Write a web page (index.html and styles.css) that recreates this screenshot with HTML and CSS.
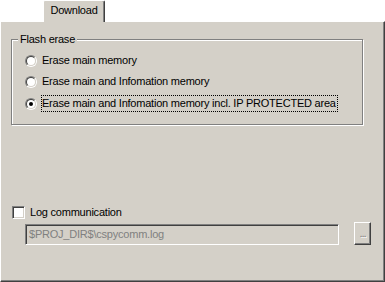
FILE: index.html
```html
<!DOCTYPE html>
<html>
<head>
<meta charset="utf-8">
<link rel="stylesheet" href="styles.css">
</head>
<body>
<div class="tabs">
  <div class="tab">Download</div>
</div>
<div class="panel">
  <div class="group">
    <span class="legend">Flash erase</span>
    <div class="row"><span class="radio"><span class="radio-in"></span></span><span class="label">Erase main memory</span></div>
    <div class="row"><span class="radio"><span class="radio-in"></span></span><span class="label">Erase main and Infomation memory</span></div>
    <div class="row"><span class="radio"><span class="radio-in"><span class="dot"></span></span></span><span class="label focus">Erase main and Infomation memory incl. IP PROTECTED area</span></div>
  </div>
  <div class="check-row"><span class="check"></span><span class="check-label">Log communication</span></div>
  <div class="path-row">
    <div class="field">$PROJ_DIR$\cspycomm.log</div>
    <div class="btn">...</div>
  </div>
</div>
</body>
</html>
```
FILE: styles.css
```css
html, body {
  margin: 0;
  padding: 0;
  background: #ffffff;
}
body {
  width: 385px;
  height: 282px;
  font-family: "Liberation Sans", Arial, sans-serif;
  font-size: 11px;
  letter-spacing: -0.22px;
  color: #000;
  overflow: hidden;
}
.tabs {
  height: 21px;
  display: flex;
  align-items: flex-end;
  padding-left: 43px;
}
.tab {
  position: relative;
  z-index: 1;
  box-sizing: border-box;
  width: 62px;
  height: 22px;
  margin-bottom: -1px;
  background: #d4d0c8;
  border-top: 1px solid #fff;
  border-left: 1px solid #fff;
  border-right: 1px solid #404040;
  box-shadow: inset -1px 0 0 #808080;
  border-top-left-radius: 2px;
  border-top-right-radius: 2px;
  display: flex;
  justify-content: center;
  padding-top: 3px;
  line-height: 13px;
}
.panel {
  box-sizing: border-box;
  height: 261px;
  background: #d4d0c8;
  border-top: 1px solid #fff;
  border-left: 1px solid #fff;
  border-right: 1px solid #404040;
  border-bottom: 1px solid #404040;
  box-shadow: inset -1px -1px 0 #808080;
  padding-top: 17px;
  padding-left: 10px;
}
.group {
  box-sizing: border-box;
  width: 352px;
  height: 86px;
  border: 1px solid #808080;
  box-shadow: inset 1px 1px 0 #fff, 1px 1px 0 #fff;
  padding: 9px 0 0 13px;
  display: flex;
  flex-direction: column;
}
.legend {
  align-self: flex-start;
  margin: -16px 0 4px -7px;
  padding: 0 2px;
  background: #d4d0c8;
  line-height: 13px;
  height: 13px;
}
.row {
  height: 21px;
  display: flex;
  align-items: center;
  gap: 5px;
}
.row:last-child {
  height: 22px;
  padding-top: 1px;
  box-sizing: border-box;
}
.radio {
  box-sizing: border-box;
  width: 12px;
  height: 12px;
  border-radius: 50%;
  border: 1px solid;
  border-color: #808080 #fff #fff #808080;
  flex: none;
}
.radio-in {
  box-sizing: border-box;
  display: flex;
  align-items: center;
  justify-content: center;
  width: 10px;
  height: 10px;
  border-radius: 50%;
  border: 1px solid;
  border-color: #404040 #d4d0c8 #d4d0c8 #404040;
  background: #fff;
}
.dot {
  width: 4px;
  height: 4px;
  border-radius: 50%;
  background: #000;
}
.label {
  line-height: 15px;
  border: 1px solid transparent;
  padding: 0 1px 0 0;
  margin-left: -1px;
}
.label.focus {
  border: 1px dotted #000;
}
.check-row {
  margin-top: 80px;
  margin-left: 1px;
  height: 14px;
  display: flex;
  align-items: center;
  gap: 5px;
}
.check {
  box-sizing: border-box;
  width: 13px;
  height: 13px;
  border: 1px solid;
  border-color: #808080 #fff #fff #808080;
  box-shadow: inset 1px 1px 0 #404040, inset -1px -1px 0 #d4d0c8;
  background: #fff;
  flex: none;
}
.path-row {
  display: flex;
  align-items: flex-start;
  margin-top: 3px;
  margin-left: 14px;
}
.field {
  box-sizing: border-box;
  width: 314px;
  height: 21px;
  margin-top: 2px;
  border: 1px solid;
  border-color: #808080 #fff #fff #808080;
  box-shadow: inset 1px 1px 0 #404040, inset -1px -1px 0 #d4d0c8;
  color: #808080;
  padding: 3px 0 0 3px;
  line-height: 13px;
  white-space: nowrap;
}
.btn {
  box-sizing: border-box;
  width: 17px;
  height: 23px;
  margin-left: 15px;
  border: 1px solid;
  border-color: #fff #404040 #404040 #fff;
  box-shadow: inset -1px -1px 0 #808080;
  color: #808080;
  text-shadow: 1px 1px 0 #fff;
  display: flex;
  justify-content: center;
  padding-top: 4px;
  line-height: 13px;
  letter-spacing: -1px;
}
```
